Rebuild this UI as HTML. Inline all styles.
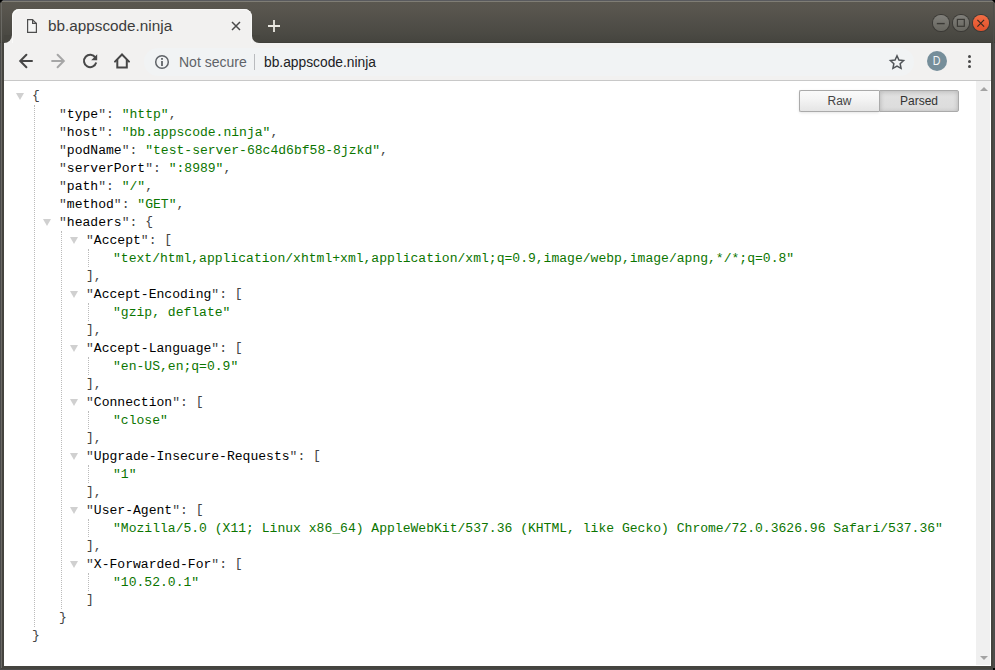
<!DOCTYPE html>
<html><head><meta charset="utf-8">
<style>
*{box-sizing:border-box}
html,body{margin:0;padding:0;width:995px;height:670px;overflow:hidden;background:#45443f;font-family:"Liberation Sans",sans-serif}
#frame{position:absolute;left:0;top:0;width:995px;height:670px;background:#45443f;border-left:1px solid #4b4b4b;border-right:1px solid #4b4b4b;border-bottom:1px solid #4b4b4b}
#titlebar{position:absolute;left:0;top:0;width:995px;height:43px;background:linear-gradient(#5b5850 0%,#58554e 20%,#4a4943 80%,#45443e 97%,#3b3a35 100%);border-top:1px solid #595a5e;border-radius:4px 4px 0 0}
#titlebar:before{content:"";position:absolute;left:2px;right:2px;top:0;height:1px;background:#7f7d75}
#fl{position:absolute;left:1px;top:3px;width:1px;height:665px;background:#6a6964}
#fr{position:absolute;left:993px;top:3px;width:1px;height:665px;background:#4f4e4a}
#corner1{position:absolute;left:0;top:0;width:3px;height:3px;background:#000;clip-path:polygon(0 0,100% 0,0 100%)}
#corner2{position:absolute;left:992px;top:0;width:3px;height:3px;background:#000;clip-path:polygon(0 0,100% 0,100% 100%)}
#tab{position:absolute;left:12px;top:9px;width:240px;height:34px;background:#f2f1f0;border-radius:7px 8px 0 0;box-shadow:inset 1px 1px 0 #fafaf9,inset -1px 0 0 #f7f7f6}
#tabflareL{position:absolute;left:4px;top:35px;width:8px;height:8px;background:#f2f1f0}
#tabflareL:after{content:"";position:absolute;left:0;top:0;width:8px;height:8px;background:#46453f;border-bottom-right-radius:8px}
#tabflareR{position:absolute;left:252px;top:35px;width:8px;height:8px;background:#f2f1f0}
#tabflareR:after{content:"";position:absolute;left:0;top:0;width:8px;height:8px;background:#46453f;border-bottom-left-radius:7px}
#tabtitle{position:absolute;left:48px;top:17px;font-size:15.3px;line-height:18px;color:#3c3c3c;white-space:nowrap}
#toolbar{position:absolute;left:4px;top:43px;width:987px;height:38px;background:#f2f1f0;border-bottom:1px solid #c8c8c8}
#omni{position:absolute;left:140px;top:5px;width:770px;height:28px;background:#f1f3f4;border-radius:14px}
#content{position:absolute;left:4px;top:81px;width:987px;height:585px;background:#fff;overflow:hidden}
#sb{position:absolute;right:1px;top:0;width:14px;height:584px;background:#f0f0f0}
.arr{position:absolute;left:3.5px;width:0;height:0;border-left:4px solid transparent;border-right:4px solid transparent}
.arr.up{top:6px;border-bottom:4px solid #a3a3a3}
.arr.dn{top:575px;border-top:4px solid #a3a3a3}
#corner3{position:absolute;left:993px;top:668px;width:2px;height:2px;background:#000}
.mono{font:13.05px/18px "Liberation Mono",monospace;white-space:pre;color:#444}
.t{position:relative;top:1px}
.br{position:relative;top:0}
#fj{position:absolute;left:0;top:0;padding-left:28px;padding-top:6px}
.kvov{display:block;padding-left:20px;margin-left:-20px;position:relative}
.e{width:20px;height:18px;display:block;position:absolute;left:-2px;top:1px}
.e:after{content:"";position:absolute;left:6px;top:5px;border-left:4px solid transparent;border-right:4px solid transparent;border-top:7.5px solid #d0d0d0}
.blockInner{display:block;padding-left:24px;border-left:1px dotted #bbb;margin-left:2px}
.k{color:#000}
.s{color:#0B7500}
#opt{position:absolute;top:9px;right:32px;display:flex}
.btn{width:80px;height:22px;border:1px solid #aaa;font-size:12px;color:#444;text-align:center;line-height:20px;box-shadow:0 1px 3px rgba(0,0,0,.1);background:linear-gradient(#fafafa,#f4f4f4 40%,#e5e5e5)}
.btn.l{border-right:none;border-radius:2px 0 0 2px}
.btn.r{border-radius:0 2px 2px 0;width:80px;box-shadow:inset 0 1px 5px rgba(0,0,0,.2);background:linear-gradient(#e4e4e4,#dfdfdf 40%,#dcdcdc);color:#333}
#docicon{}
.wbtn{position:absolute;top:15px;width:15.5px;height:15.5px;border-radius:50%;background:linear-gradient(#807f7a,#67665f);box-shadow:0 0 0 1px #3b3a36}
.wbtn svg{position:absolute;left:0;top:0}
.wbtn.close{background:linear-gradient(#f36d44,#e0502a)}
#notsecure{position:absolute;left:179px;top:53px;font-size:14px;line-height:18px;color:#5f6368;white-space:nowrap}
#url{position:absolute;left:264px;top:54px;font-size:13.8px;line-height:18px;color:#202124;white-space:nowrap}
#avatar{position:absolute;left:927px;top:51px;width:20px;height:20px;border-radius:50%;background:#768e9a;color:#f4f6f7;font-size:13px;line-height:20px;text-align:center}
.dot{position:absolute;left:968px;width:3.2px;height:3.2px;border-radius:50%;background:#484848}
</style></head><body>
<div id="frame"></div>
<div id="titlebar"></div><div id="fl"></div><div id="fr"></div><div id="corner1"></div><div id="corner2"></div><div id="corner3"></div>
<div id="tabflareL"></div>
<div id="tabflareR"></div>
<div id="tab"></div>
<svg id="docicon" width="12" height="16" viewBox="0 0 12 16" style="position:absolute;left:26px;top:18px"><path d="M1.6 1.6 H6.4 L10.4 5.6 V14.4 H1.6 Z" fill="#f5f5f4" stroke="#4e4e4e" stroke-width="1.2" stroke-linejoin="miter"/><path d="M6.6 1.4 V5.4 H10.6" fill="none" stroke="#4e4e4e" stroke-width="1.2"/></svg>
<div id="tabtitle">bb.appscode.ninja</div>
<svg width="10" height="10" viewBox="0 0 10 10" style="position:absolute;left:231px;top:21px"><path d="M1 1L9 9M9 1L1 9" stroke="#4a4a4a" stroke-width="1.5"/></svg>
<svg width="14" height="14" viewBox="0 0 14 14" style="position:absolute;left:267px;top:19px"><path d="M7 1V13M1 7H13" stroke="#ebe9e2" stroke-width="1.8"/></svg>
<div class="wbtn" style="left:933.3px"><svg width="15.5" height="15.5" viewBox="0 0 15.5 15.5"><path d="M3.8 8.6H11.7" stroke="#3a3935" stroke-width="1.4"/></svg></div>
<div class="wbtn" style="left:953.3px"><svg width="15.5" height="15.5" viewBox="0 0 15.5 15.5"><rect x="4.4" y="4.4" width="6.9" height="6.9" fill="none" stroke="#3a3935" stroke-width="1.2"/></svg></div>
<div class="wbtn close" style="left:973.3px"><svg width="15.5" height="15.5" viewBox="0 0 15.5 15.5"><path d="M4.4 4.9L11.1 11.6M11.1 4.9L4.4 11.6" stroke="#3a2a20" stroke-width="1.2"/></svg></div>
<div id="toolbar">
  <div id="omni"></div>
</div>
<svg width="20" height="20" viewBox="0 0 20 20" style="position:absolute;left:16px;top:51px"><path d="M16 10H4.6M10.4 3.7L4.2 10L10.4 16.3" fill="none" stroke="#464646" stroke-width="2" stroke-linecap="round"/></svg>
<svg width="20" height="20" viewBox="0 0 20 20" style="position:absolute;left:48px;top:51px"><path d="M4.1 10H15.4M9.6 3.7L15.8 10L9.6 16.3" fill="none" stroke="#a6a6a6" stroke-width="2" stroke-linecap="round"/></svg>
<svg width="20" height="20" viewBox="0 0 20 20" style="position:absolute;left:80px;top:51px"><path d="M15.4 6.6 A6.2 6.2 0 1 0 16.2 11.6" fill="none" stroke="#484848" stroke-width="2"/><path d="M17.2 3.2V9.2H11.2Z" fill="#484848"/></svg>
<svg width="20" height="20" viewBox="0 0 20 20" style="position:absolute;left:112px;top:51px"><path d="M3 10.6L10 3.5L17 10.6" fill="none" stroke="#464646" stroke-width="2" stroke-linecap="round"/><path d="M5.3 8.2V16.6H14.8V8.2" fill="none" stroke="#464646" stroke-width="2"/></svg>
<svg width="18" height="18" viewBox="0 0 18 18" style="position:absolute;left:153px;top:53px"><circle cx="9" cy="9" r="6.3" fill="none" stroke="#5f6368" stroke-width="1.5"/><rect x="8.1" y="8" width="1.8" height="5" fill="#5f6368"/><rect x="8.1" y="5" width="1.8" height="1.8" fill="#5f6368"/></svg>
<div id="notsecure">Not secure</div>
<div style="position:absolute;left:254px;top:54px;width:1px;height:16px;background:#b9bbbe"></div>
<div id="url">bb.appscode.ninja</div>
<svg width="18" height="18" viewBox="0 0 18 18" style="position:absolute;left:888px;top:53px"><path d="M9.00 2.80 L10.94 7.03 L15.56 7.57 L12.14 10.72 L13.06 15.28 L9.00 13.00 L4.94 15.28 L5.86 10.72 L2.44 7.57 L7.06 7.03Z" fill="none" stroke="#505458" stroke-width="1.5" stroke-linejoin="miter"/></svg>
<div id="avatar"><span style="display:inline-block;transform:scale(0.82,0.95);position:relative;top:0;left:-0.2px">D</span></div>
<div class="dot" style="top:55px"></div><div class="dot" style="top:60px"></div><div class="dot" style="top:65px"></div>
<div id="content">
<div id="fj" class="mono"><span class="kvov"><span class="e"></span><span class="br">{</span><span class="blockInner"><span class="kvov"><span class="t">"</span><span class="k t">type</span><span class="t">": </span><span class="s t">"http"</span><span class="t">,</span></span><span class="kvov"><span class="t">"</span><span class="k t">host</span><span class="t">": </span><span class="s t">"bb.appscode.ninja"</span><span class="t">,</span></span><span class="kvov"><span class="t">"</span><span class="k t">podName</span><span class="t">": </span><span class="s t">"test-server-68c4d6bf58-8jzkd"</span><span class="t">,</span></span><span class="kvov"><span class="t">"</span><span class="k t">serverPort</span><span class="t">": </span><span class="s t">":8989"</span><span class="t">,</span></span><span class="kvov"><span class="t">"</span><span class="k t">path</span><span class="t">": </span><span class="s t">"/"</span><span class="t">,</span></span><span class="kvov"><span class="t">"</span><span class="k t">method</span><span class="t">": </span><span class="s t">"GET"</span><span class="t">,</span></span><span class="kvov"><span class="e"></span><span class="t">"</span><span class="k t">headers</span><span class="t">": </span><span class="br">{</span><span class="blockInner"><span class="kvov"><span class="e"></span><span class="t">"</span><span class="k t">Accept</span><span class="t">": </span><span class="br">[</span><span class="blockInner"><span class="kvov"><span class="s t">"text/html,application/xhtml+xml,application/xml;q=0.9,image/webp,image/apng,*/*;q=0.8"</span></span></span><span class="br">]</span><span class="t">,</span></span><span class="kvov"><span class="e"></span><span class="t">"</span><span class="k t">Accept-Encoding</span><span class="t">": </span><span class="br">[</span><span class="blockInner"><span class="kvov"><span class="s t">"gzip, deflate"</span></span></span><span class="br">]</span><span class="t">,</span></span><span class="kvov"><span class="e"></span><span class="t">"</span><span class="k t">Accept-Language</span><span class="t">": </span><span class="br">[</span><span class="blockInner"><span class="kvov"><span class="s t">"en-US,en;q=0.9"</span></span></span><span class="br">]</span><span class="t">,</span></span><span class="kvov"><span class="e"></span><span class="t">"</span><span class="k t">Connection</span><span class="t">": </span><span class="br">[</span><span class="blockInner"><span class="kvov"><span class="s t">"close"</span></span></span><span class="br">]</span><span class="t">,</span></span><span class="kvov"><span class="e"></span><span class="t">"</span><span class="k t">Upgrade-Insecure-Requests</span><span class="t">": </span><span class="br">[</span><span class="blockInner"><span class="kvov"><span class="s t">"1"</span></span></span><span class="br">]</span><span class="t">,</span></span><span class="kvov"><span class="e"></span><span class="t">"</span><span class="k t">User-Agent</span><span class="t">": </span><span class="br">[</span><span class="blockInner"><span class="kvov"><span class="s t">"Mozilla/5.0 (X11; Linux x86_64) AppleWebKit/537.36 (KHTML, like Gecko) Chrome/72.0.3626.96 Safari/537.36"</span></span></span><span class="br">]</span><span class="t">,</span></span><span class="kvov"><span class="e"></span><span class="t">"</span><span class="k t">X-Forwarded-For</span><span class="t">": </span><span class="br">[</span><span class="blockInner"><span class="kvov"><span class="s t">"10.52.0.1"</span></span></span><span class="br">]</span></span></span><span class="br">}</span></span></span><span class="br">}</span></span></div>
<div id="opt"><div class="btn l">Raw</div><div class="btn r">Parsed</div></div>
<div id="sb"><div class="arr up"></div><div class="arr dn"></div></div>
</div>
</body></html>
